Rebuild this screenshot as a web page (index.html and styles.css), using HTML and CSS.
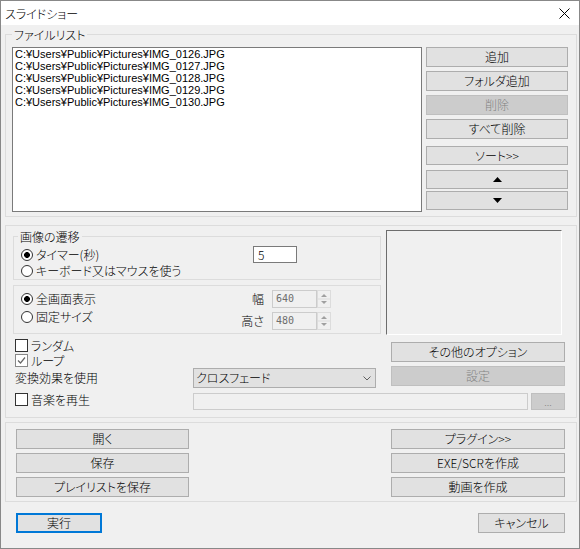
FILE: index.html
```html
<!DOCTYPE html>
<html lang="ja">
<head>
<meta charset="utf-8">
<title>スライドショー</title>
<link rel="stylesheet" href="styles.css">
</head>
<body>
<div class="window">
  <div class="titlebar">
    <span class="title">スライドショー</span>
    <svg class="close" width="11" height="11" viewBox="0 0 11 11"><path d="M0.5 0.5L10.5 10.5M10.5 0.5L0.5 10.5" stroke="#000" stroke-width="1" fill="none"/></svg>
  </div>
  <div class="body">
    <fieldset class="group group-files">
      <legend>ファイルリスト</legend>
      <div class="files">
        <div class="listbox">
          <div class="item">C:¥Users¥Public¥Pictures¥IMG_0126.JPG</div>
          <div class="item">C:¥Users¥Public¥Pictures¥IMG_0127.JPG</div>
          <div class="item">C:¥Users¥Public¥Pictures¥IMG_0128.JPG</div>
          <div class="item">C:¥Users¥Public¥Pictures¥IMG_0129.JPG</div>
          <div class="item">C:¥Users¥Public¥Pictures¥IMG_0130.JPG</div>
        </div>
        <div class="file-buttons">
          <button class="btn">追加</button>
          <button class="btn gap4">フォルダ追加</button>
          <button class="btn gap4" disabled>削除</button>
          <button class="btn gap4">すべて削除</button>
          <button class="btn short gap7">ソート&gt;&gt;</button>
          <button class="btn short gap5"><svg width="9" height="5" viewBox="0 0 9 5"><path d="M4.5 0L9 5H0Z" fill="#000"/></svg></button>
          <button class="btn short gap2"><svg width="9" height="5" viewBox="0 0 9 5"><path d="M0 0H9L4.5 5Z" fill="#000"/></svg></button>
        </div>
      </div>
    </fieldset>

    <div class="group group-settings">
      <div class="settings-top">
        <div class="settings-left">
          <fieldset class="sub sub-transition">
            <legend>画像の遷移</legend>
            <div class="timer-row">
              <div class="radio-item"><span class="radio on"></span>タイマー(秒)</div>
              <div class="textbox">5</div>
            </div>
            <div class="radio-item key-row"><span class="radio"></span>キーボード又はマウスを使う</div>
          </fieldset>
          <div class="sub sub-size">
            <div class="size-radios">
              <div class="radio-item size-radio"><span class="radio on"></span>全画面表示</div>
              <div class="radio-item size-radio"><span class="radio"></span>固定サイズ</div>
            </div>
            <div class="size-fields">
              <div class="size-row">
                <span class="size-label">幅</span>
                <span class="num">640</span>
                <span class="spin"><svg width="14" height="18" viewBox="0 0 14 18"><rect x="0.5" y="0.5" width="13" height="17" fill="#f0f0f0" stroke="#dcdcdc"/><line x1="1" y1="9" x2="13" y2="9" stroke="#dcdcdc"/><path d="M7 4L10 7H4Z" fill="#a0a0a0"/><path d="M4 11H10L7 14Z" fill="#a0a0a0"/></svg></span>
              </div>
              <div class="size-row">
                <span class="size-label">高さ</span>
                <span class="num">480</span>
                <span class="spin"><svg width="14" height="18" viewBox="0 0 14 18"><rect x="0.5" y="0.5" width="13" height="17" fill="#f0f0f0" stroke="#dcdcdc"/><line x1="1" y1="9" x2="13" y2="9" stroke="#dcdcdc"/><path d="M7 4L10 7H4Z" fill="#a0a0a0"/><path d="M4 11H10L7 14Z" fill="#a0a0a0"/></svg></span>
              </div>
            </div>
          </div>
        </div>
        <div class="preview"></div>
      </div>

      <div class="settings-mid">
        <div class="mid-left">
          <div class="check-row"><span class="check"></span><span class="check-text">ランダム</span></div>
          <div class="check-row"><span class="check checked"><svg width="11" height="11" viewBox="0 0 11 11"><path d="M2 5.5L4.5 8L9 2.5" stroke="#666" stroke-width="1.2" fill="none"/></svg></span><span class="check-text">ループ</span></div>
          <div class="effect-row">
            <span class="effect-label">変換効果を使用</span>
            <div class="select">
              <span>クロスフェード</span>
              <svg width="8" height="5" viewBox="0 0 8 5"><path d="M0.5 0.5L4 4L7.5 0.5" stroke="#606060" stroke-width="1" fill="none"/></svg>
            </div>
          </div>
        </div>
        <div class="mid-right">
          <button class="btn">その他のオプション</button>
          <button class="btn" disabled>設定</button>
        </div>
      </div>

      <div class="music-row">
        <div class="music-check"><span class="check"></span>音楽を再生</div>
        <div class="path-field"></div>
        <button class="btn btn-browse" disabled>...</button>
      </div>
    </div>

    <div class="group group-actions">
      <div class="action-col col-left">
        <button class="btn">開く</button>
        <button class="btn">保存</button>
        <button class="btn">プレイリストを保存</button>
      </div>
      <div class="action-col col-right">
        <button class="btn">プラグイン&gt;&gt;</button>
        <button class="btn">EXE/SCRを作成</button>
        <button class="btn">動画を作成</button>
      </div>
    </div>

    <div class="footer">
      <button class="btn btn-default">実行</button>
      <button class="btn btn-cancel">キャンセル</button>
    </div>
  </div>
</div>
</body>
</html>
```

FILE: styles.css
```css
* { box-sizing: border-box; }
html, body { margin: 0; padding: 0; }
body {
  width: 580px;
  height: 549px;
  font-family: "Noto Sans CJK JP", sans-serif;
  font-size: 12px;
  font-weight: 300;
  color: #000;
  font-feature-settings: "palt";
  background: #f0f0f0;
  overflow: hidden;
}
.window {
  width: 580px;
  height: 549px;
  border: 1px solid #888;
  background: #f0f0f0;
  display: flex;
  flex-direction: column;
}
.titlebar {
  flex: none;
  height: 24px;
  background: #fff;
  display: flex;
  align-items: center;
  justify-content: space-between;
  padding: 1px 9px 0 4px;
}
.title { line-height: 14px; }
.close { display: block; }

.body { padding: 0 2px 0 4px; }

.group {
  border: 1px solid #dcdcdc;
  margin: 0;
  min-width: 0;
}
legend {
  padding: 0 2px;
  height: 15px;
  line-height: 15px;
}

/* file list */
.group-files { margin-top: 2px; padding: 5px 8px 4px 6px; }
.files { display: flex; gap: 4px; }
.listbox {
  width: 410px;
  height: 165px;
  background: #fff;
  border: 1px solid #7a7a7a;
  padding: 0 2px;
  white-space: nowrap;
}
.item {
  height: 12px;
  font-family: "Liberation Sans", "Noto Sans CJK JP", sans-serif;
  font-weight: 400;
  font-size: 11px;
  line-height: 12px;
}
.file-buttons {
  width: 142px;
  display: flex;
  flex-direction: column;
}
.btn {
  display: flex;
  align-items: center;
  justify-content: center;
  height: 20px;
  margin: 0;
  padding: 0;
  border: 1px solid #adadad;
  background: #e1e1e1;
  font: inherit;
  font-feature-settings: "palt";
  color: #000;
  line-height: 14px;
}
.btn:disabled {
  background: #cccccc;
  border-color: #bfbfbf;
  color: #838383;
}
.btn svg { display: block; }
.short { height: 19px; }
.gap2 { margin-top: 2px; }
.gap4 { margin-top: 4px; }
.gap5 { margin-top: 5px; }
.gap7 { margin-top: 7px; }

/* settings */
.group-settings { margin-top: 8px; padding: 3px 11px 7px 7px; }
.settings-top { display: flex; gap: 5px; align-items: flex-start; }
.settings-left { width: 368px; }
.sub { border: 1px solid #dcdcdc; margin: 0; min-width: 0; }
.sub-transition { padding: 2px 0 0 7px; }
.sub-transition legend { margin-left: -3px; }
.timer-row {
  display: grid;
  grid-template-columns: 232px 44px;
  align-items: center;
  height: 17px;
}
.key-row { height: 16px; }
.radio-item { display: flex; align-items: center; gap: 3px; line-height: 14px; }
.radio {
  width: 12px;
  height: 12px;
  border: 1px solid #333;
  border-radius: 50%;
  background: #fff;
  flex: none;
}
.radio.on { background: radial-gradient(circle, #000 0 2.6px, #fff 3.2px); }
.textbox {
  width: 44px;
  height: 17px;
  border: 1px solid #7a7a7a;
  background: #fff;
  padding-left: 4px;
  line-height: 15px;
}
.sub-size {
  margin-top: 5px;
  padding: 4px 49px 3px 7px;
  display: flex;
  justify-content: space-between;
}
.size-radio { height: 18px; }
.size-fields { display: flex; flex-direction: column; gap: 4px; }
.size-row { display: flex; align-items: center; height: 18px; }
.size-label { width: 24px; text-align: right; margin-right: 8px; line-height: 14px; }
.num {
  width: 45px;
  height: 18px;
  border: 1px solid #cccccc;
  background: #f0f0f0;
  color: #6d6d6d;
  font-family: "DejaVu Sans Mono", monospace;
  font-size: 10px;
  line-height: 16px;
  padding-left: 3px;
}
.spin { display: block; width: 14px; height: 18px; }
.spin svg { display: block; }
.preview {
  width: 176px;
  height: 105px;
  margin-top: 1px;
  border-style: solid;
  border-width: 1px;
  border-color: #6d6d6d #ffffff #ffffff #6d6d6d;
  background: #f0f0f0;
}

.settings-mid { display: flex; margin-top: 3px; }
.mid-left { margin-left: 2px; width: 361px; }
.check-row { display: flex; align-items: center; gap: 3px; height: 15px; }
.check-text { line-height: 13px; height: 13px; }
.check {
  width: 13px;
  height: 13px;
  border: 1px solid #333;
  background: #fff;
  flex: none;
  display: flex;
  align-items: center;
  justify-content: center;
}
.check.checked { border-color: #888; }
.check svg { display: block; }
.effect-row { display: flex; align-items: center; height: 20px; }
.effect-label { width: 178px; line-height: 14px; }
.select {
  width: 183px;
  height: 20px;
  border: 1px solid #adadad;
  background: #e1e1e1;
  display: flex;
  align-items: center;
  justify-content: space-between;
  padding: 0 4px 0 2px;
  line-height: 14px;
}
.mid-right {
  margin-left: auto;
  width: 174px;
  padding-top: 4px;
  display: flex;
  flex-direction: column;
  gap: 4px;
}

.music-row { display: flex; margin-top: 5px; margin-left: 2px; height: 17px; }
.music-check { width: 178px; display: flex; gap: 3px; align-items: center; height: 13px; line-height: 13px; }
.path-field {
  width: 335px;
  height: 17px;
  border: 1px solid #cccccc;
  background: #f0f0f0;
}
.btn-browse { width: 34px; height: 17px; margin-left: 3px; font-size: 10px; }

/* actions */
.group-actions {
  margin-top: 4px;
  padding: 6px 11px 4px 10px;
  display: flex;
  justify-content: space-between;
}
.action-col { display: flex; flex-direction: column; gap: 4px; }
.col-left { width: 173px; }
.col-right { width: 174px; }

.footer {
  display: flex;
  justify-content: space-between;
  padding: 0 12px 0 11px;
  margin-top: 11px;
}
.btn-default { width: 86px; border: 2px solid #0078d7; }
.btn-cancel { width: 87px; }
```
